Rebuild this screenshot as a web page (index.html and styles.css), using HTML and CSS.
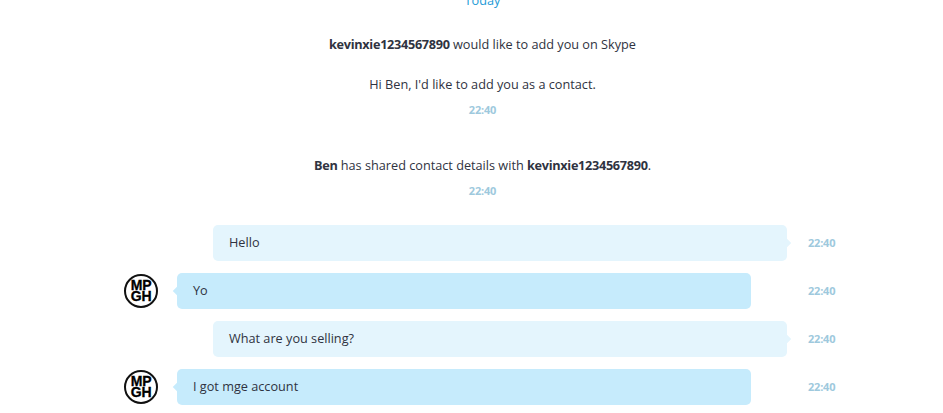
FILE: index.html
```html
<!DOCTYPE html>
<html lang="en">
<head>
  <meta charset="UTF-8">
  <meta name="viewport" content="width=device-width, initial-scale=1">
  <title>conversation</title>

  <link rel="stylesheet" href="styles.css">
</head>

<body>

  <div class="conversation">
    <div class="day-label">Today</div>

    <div class="notice notice-request">
      <p><b>kevinxie1234567890</b> would like to add you on Skype</p>
      <p class="notice-body">Hi Ben, I'd like to add you as a contact.</p>
      <div class="time">22:40</div>
    </div>

    <div class="notice notice-shared">
      <p><b>Ben</b> has shared contact details with <b>kevinxie1234567890</b>.</p>
      <div class="time">22:40</div>
    </div>

    <div class="messages">
      <div class="row">
        <div class="bubble bubble-out">Hello</div>
        <div class="time">22:40</div>
      </div>
      <div class="row">
        <div class="avatar">MP<br>GH</div>
        <div class="bubble bubble-in">Yo</div>
        <div class="time">22:40</div>
      </div>
      <div class="row">
        <div class="bubble bubble-out">What are you selling?</div>
        <div class="time">22:40</div>
      </div>
      <div class="row">
        <div class="avatar">MP<br>GH</div>
        <div class="bubble bubble-in">I got mge account</div>
        <div class="time">22:40</div>
      </div>
    </div>
  </div>

</body>
</html>
```

FILE: styles.css
```css
html, body {
  height: 100%;
}

body {
  font-family: 'Open Sans', sans-serif;
  font-size: 12.7px;
  margin: 0;
  padding: 0;
  background: #fff;
  color: #2f3341;
  overflow: hidden;
}

p {
  margin: 0;
}

b {
  letter-spacing: -0.3px;
}

.conversation {
  width: 711px;
  margin-left: 124px;
  margin-top: -9px;
}

.day-label {
  text-align: center;
  color: #1c9ad6;
  line-height: 18px;
  padding-left: 6px;
}

.notice {
  text-align: center;
  line-height: 18px;
  padding-left: 6px;
}

.notice-request {
  margin-top: 26px;
}

.notice-shared {
  margin-top: 37px;
}

.notice-body {
  margin-top: 22px;
}

.notice .time {
  margin-top: 8px;
}

.time {
  color: #9ec9dd;
  font-size: 11px;
  font-weight: bold;
  line-height: 18px;
  letter-spacing: -0.2px;
}

.messages {
  display: flex;
  flex-direction: column;
  gap: 12px;
  margin-top: 25px;
}

.row {
  display: flex;
  align-items: center;
  justify-content: flex-end;
}

.row .time {
  width: 27px;
  margin-left: 21px;
}

.bubble {
  position: relative;
  box-sizing: border-box;
  width: 574px;
  height: 36px;
  line-height: 34px;
  padding: 0 16px;
  border-radius: 5px;
}

.bubble::after {
  content: "";
  position: absolute;
  top: 15px;
  width: 6px;
  height: 6px;
  transform: rotate(45deg);
}

.bubble-out {
  background: #e4f5fd;
}

.bubble-out::after {
  right: -3px;
  background: #e4f5fd;
}

.bubble-in {
  background: #c6ebfc;
  margin-left: 19px;
  margin-right: 36px;
}

.bubble-in::after {
  left: -3px;
  background: #c6ebfc;
}

.avatar {
  box-sizing: border-box;
  width: 34px;
  height: 34px;
  border: 2px solid #111;
  border-radius: 50%;
  color: #000;
  text-align: center;
  font-family: 'Liberation Sans', sans-serif;
  font-size: 14px;
  font-weight: bold;
  line-height: 10.5px;
  letter-spacing: -0.3px;
  padding-top: 4px;
  -webkit-text-stroke: 0.3px #000;
}
```
